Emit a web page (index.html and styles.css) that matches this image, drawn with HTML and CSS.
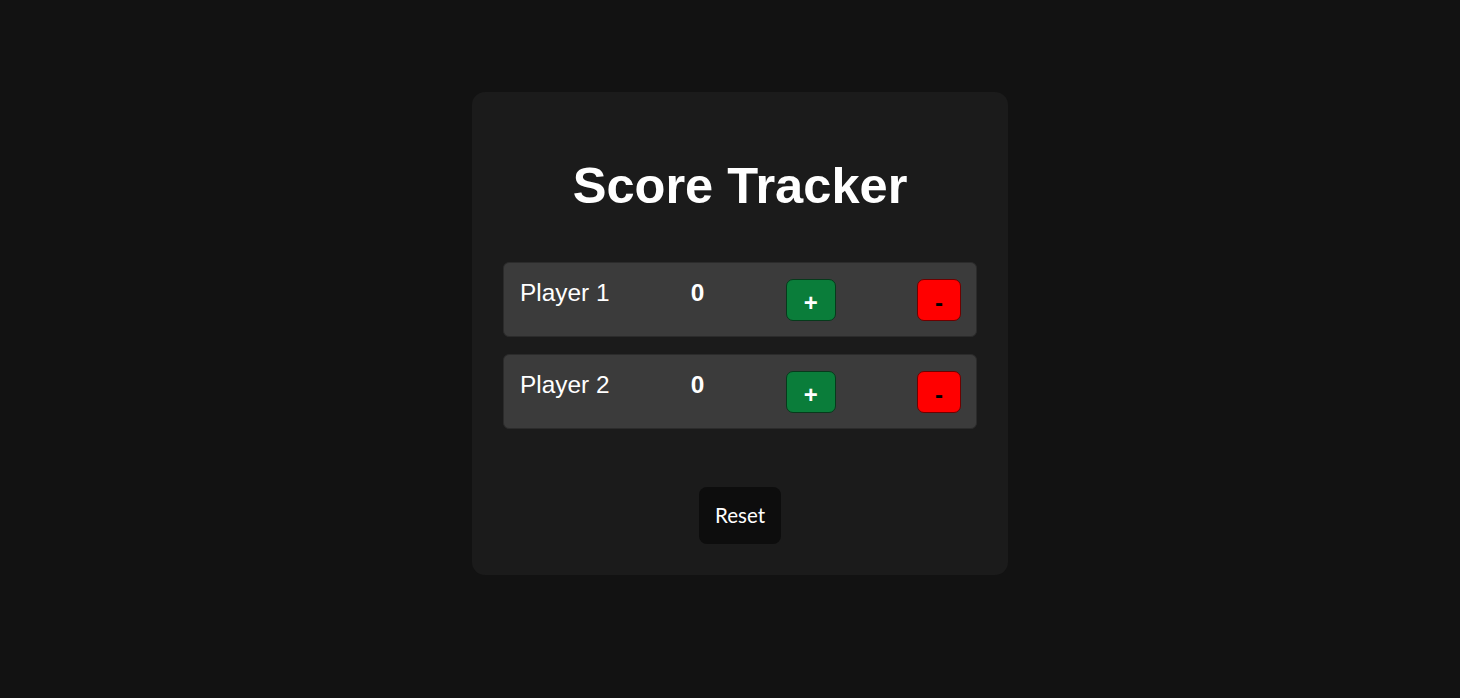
FILE: index.html
```html
<!DOCTYPE html>
<html lang="en">
<head>
<meta charset="utf-8">
<title>Score Tracker</title>
<link rel="stylesheet" href="styles.css">
</head>
<body>
<main class="card">
  <h1 class="title">Score Tracker</h1>
  <div class="players">
    <div class="player">
      <span class="name">Player 1</span>
      <span class="score">0</span>
      <button class="btn plus">+</button>
      <button class="btn minus">-</button>
    </div>
    <div class="player">
      <span class="name">Player 2</span>
      <span class="score">0</span>
      <button class="btn plus">+</button>
      <button class="btn minus">-</button>
    </div>
  </div>
  <button class="reset">Reset</button>
</main>
</body>
</html>
```

FILE: styles.css
```css
html, body {
  margin: 0;
  padding: 0;
  background: #121212;
}
body {
  display: flex;
  justify-content: center;
  align-items: flex-start;
  padding: 92px 0 0 20px;
  height: 698px;
  box-sizing: border-box;
  font-family: "Liberation Sans", Arial, sans-serif;
  color: #ffffff;
}
.card {
  width: 536px;
  box-sizing: border-box;
  background: #1b1b1b;
  border-radius: 13px;
  padding: 66px 31px 31px;
  display: flex;
  flex-direction: column;
  align-items: center;
}
.title {
  margin: 0;
  font-size: 50.6px;
  font-weight: bold;
  line-height: 56px;
  text-align: center;
}
.players {
  margin-top: 48px;
  width: 100%;
  display: flex;
  flex-direction: column;
  gap: 17px;
}
.player {
  display: flex;
  justify-content: space-between;
  align-items: flex-start;
  background: #3b3b3b;
  border: 1px solid #2b2b2b;
  border-radius: 6px;
  padding: 15px 15px 15px;
  height: 75px;
  box-sizing: border-box;
}
.name {
  font-size: 24.4px;
  line-height: 28px;
  padding-left: 1px;
  margin-top: 1px;
}
.score {
  font-size: 24.4px;
  font-weight: bold;
  line-height: 28px;
  margin-top: 1px;
}
.btn {
  font-family: "Liberation Sans", Arial, sans-serif;
  font-size: 24px;
  font-weight: bold;
  line-height: 28px;
  height: 42px;
  margin-top: 1px;
  padding: 9px 17px 3px;
  border-radius: 7px;
  box-sizing: border-box;
  cursor: pointer;
}
.plus {
  background: #0a7d3a;
  border: 1px solid #063a1b;
  color: #ffffff;
}
.minus {
  background: #ff0000;
  border: 1px solid #6e0000;
  color: #000000;
}
.reset {
  margin-top: 58px;
  background: #0d0d0d;
  color: #ffffff;
  border: none;
  border-radius: 8px;
  font-family: Lato, "Open Sans", sans-serif;
  font-size: 20.5px;
  line-height: 25px;
  padding: 16px 16px;
  cursor: pointer;
}
```
